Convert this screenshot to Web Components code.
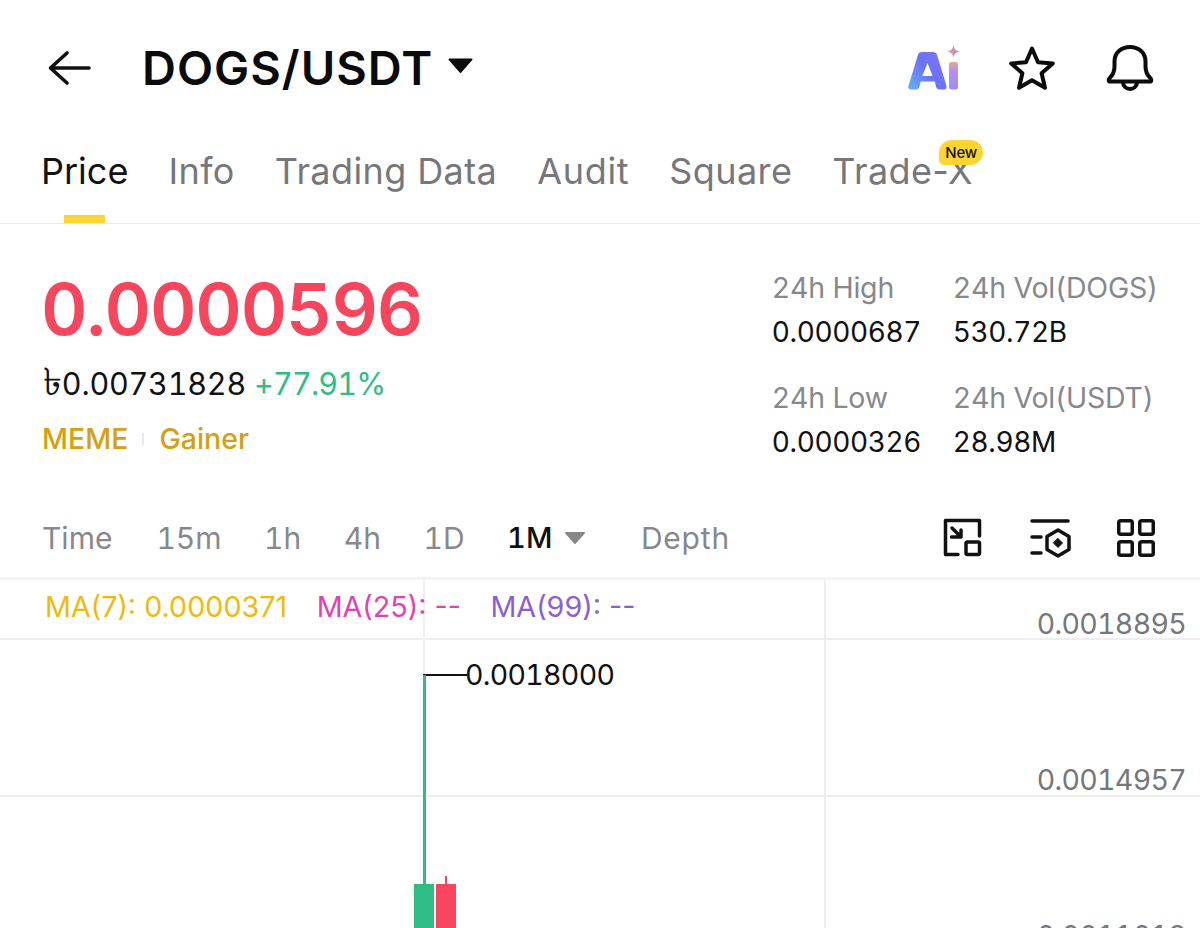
<!DOCTYPE html>
<html lang="en">
<head>
<meta charset="utf-8">
<title>DOGS/USDT</title>
<style>
  html, body { margin: 0; background: #fff; }
  body { width: 1200px; height: 928px; overflow: hidden; font-family: Inter, "Noto Sans", sans-serif; }
</style>
</head>
<body>
<market-page></market-page>

<script>
class TopBar extends HTMLElement {
  constructor() {
    super();
    this.attachShadow({ mode: "open" }).innerHTML = `
    <style>
      :host { display: flex; align-items: center; height: 135px; box-sizing: border-box; padding: 0 46px 0 47px; }
      .back { width: 46px; height: 40px; }
      h1 { margin: 0 0 0 49px; font-size: 47px; font-weight: 600; color: #0b0b0b; letter-spacing: 1px; }
      .caret { width: 25px; height: 17px; margin-left: 15px; margin-bottom: 5px; }
      .icons { margin-left: auto; display: flex; align-items: center; gap: 48px; }
      .icons svg:last-child { margin-left: 2px; }
      svg { display: block; }
    </style>
    <svg class="back" viewBox="0 0 46 40" fill="none" stroke="#111" stroke-width="3.6" stroke-linecap="round" stroke-linejoin="round">
      <path d="M42 20H4M20 5 3.5 20 20 35"/>
    </svg>
    <h1><slot></slot></h1>
    <svg class="caret" viewBox="0 0 25 17"><path d="M1.500 1.500h22a1 1 0 0 1 .8 1.600L13.300 15.600a1 1 0 0 1-1.600 0L.7 3.100a1 1 0 0 1 .8-1.600z" fill="#0b0b0b"/></svg>
    <div class="icons">
      <svg width="54" height="50" viewBox="0 0 54 50">
        <defs>
          <linearGradient id="a" x1="0" y1="1" x2="1" y2="0.2"><stop offset="0" stop-color="#5fb2ff"/><stop offset="0.55" stop-color="#6b72f6"/><stop offset="1" stop-color="#7d73f7"/></linearGradient>
          <linearGradient id="i" x1="0" y1="0" x2="0" y2="1"><stop offset="0" stop-color="#e9a58f"/><stop offset="0.3" stop-color="#b691ee"/><stop offset="1" stop-color="#9d8cf5"/></linearGradient>
          <linearGradient id="s" x1="0" y1="1" x2="1" y2="0"><stop offset="0" stop-color="#f3a26f"/><stop offset="1" stop-color="#9a86f5"/></linearGradient>
        </defs>
        <path fill="url(#a)" fill-rule="evenodd" d="M16 9h11c2 0 3.300.9 4 2.800L40.500 43c.5 2-.7 3.500-2.500 3.500h-4.500c-1.800 0-3-1-3.400-2.500l-1.300-5.500H14.700L13.300 44c-.5 1.600-1.700 2.500-3.400 2.500H5C3 46.500 1.800 45 2.400 43L12 11.800C12.700 9.900 14 9 16 9zM21.500 20l-5.200 13h10.400z"/>
        <rect x="43" y="19" width="9" height="27.500" rx="2.500" fill="url(#i)"/>
        <path fill="url(#s)" d="M47.500 2c.6 4 2.400 5.800 6.500 6.500-4.100.7-5.900 2.500-6.500 6.500-.6-4-2.400-5.800-6.500-6.500C45.100 7.800 46.900 6 47.500 2z"/>
      </svg>
      <svg width="48" height="46" viewBox="0 0 48 46" fill="none" stroke="#0b0b0b" stroke-width="4" stroke-linejoin="round">
        <path d="M24 3.500 30 17.200l14.800 1.300-11.200 9.800 3.400 14.500L24 35.200l-13 7.600 3.400-14.500L3.200 18.500 18 17.200z"/>
      </svg>
      <svg width="48" height="48" viewBox="0 0 48 48" fill="none" stroke="#0b0b0b" stroke-width="4" stroke-linejoin="round" stroke-linecap="round">
        <path d="M3.500 37.500c-1.400-1-.8-2.500.3-3.600 3.300-3.100 4.700-5.800 4.700-11.400v-5C8.500 9 15 3 24 3s15.500 6 15.500 14.500v5c0 5.600 1.400 8.300 4.700 11.400 1.100 1.100 1.700 2.600.3 3.600z"/>
        <path d="M16.800 38c.5 4.300 3.400 7 7.200 7s6.700-2.700 7.200-7"/>
      </svg>
    </div>`;
  }
}

class TabBar extends HTMLElement {
  constructor() {
    super();
    this.attachShadow({ mode: "open" }).innerHTML = `
    <style>
      :host { display: flex; gap: 40px; height: 89px; box-sizing: border-box; padding: 13px 0 0 41px; border-bottom: 1px solid #e9eaec; }
    </style>
    <slot></slot>`;
  }
}

class TabItem extends HTMLElement {
  constructor() {
    super();
    this.attachShadow({ mode: "open" }).innerHTML = `
    <style>
      :host { display: block; position: relative; height: 75px; font-size: 36px; line-height: 46px; color: #76777a; letter-spacing: 0.4px; white-space: nowrap; }
      :host([active]) { color: #111; letter-spacing: 0; }
      :host([active])::after { content: ""; position: absolute; left: 23px; bottom: 0; width: 41px; height: 8px; background: #fcd535; }
      .badge { position: absolute; right: -10px; top: -8px; height: 25px; padding: 0 6px; border-radius: 13px 13px 13px 5px; background: #fcd535; color: #111; font-size: 15px; font-weight: 500; line-height: 25px; letter-spacing: -0.2px; }
      .badge:empty { display: none; }
    </style>
    <slot></slot><span class="badge">${this.getAttribute("badge") || ""}</span>`;
  }
}

class PricePanel extends HTMLElement {
  constructor() {
    super();
    this.attachShadow({ mode: "open" }).innerHTML = `
    <style>
      :host { display: flex; justify-content: space-between; height: 281px; box-sizing: border-box; padding: 44px 42px 0 41px; font-variant-numeric: tabular-nums; }
      .last { font-size: 72px; font-weight: 600; line-height: 82px; color: #f6465d; letter-spacing: -1.200px; }
      .fiat { display: flex; align-items: baseline; margin-top: 12px; padding-left: 2px; font-size: 30.500px; line-height: 44px; color: #111; letter-spacing: -0.2px; white-space: pre; }
      .fiat i { font-style: normal; font-size: 38px; line-height: 0; }
      .fiat span { margin-left: 8px; color: #2ebd85; letter-spacing: -0.8px; }
      .tags { display: flex; align-items: center; margin-top: 11px; padding-left: 1px; font-size: 28.500px; line-height: 44px; font-weight: 500; color: #d6a00f; }
      .tags i { width: 2px; height: 12px; margin: 0 15px 0 14px; background: #e8e9ec; }
      .stats { display: grid; grid-template-columns: 181px auto; grid-auto-rows: 44px; margin-top: -2px; font-size: 28px; line-height: 44px; color: #111; letter-spacing: -0.4px; }
      .stats b { font-size: 28.500px; font-weight: 400; color: #86888c; letter-spacing: -0.2px; }
      .stats .row2 { margin-top: 22px; }
    </style>
    <div>
      <div class="last">0.0000596</div>
      <div class="fiat"><i>৳</i>0.00731828<span>+77.91%</span></div>
      <div class="tags">MEME<i></i>Gainer</div>
    </div>
    <div class="stats">
      <b>24h High</b><b>24h Vol(DOGS)</b>
      <div>0.0000687</div><div>530.72B</div>
      <b class="row2">24h Low</b><b class="row2">24h Vol(USDT)</b>
      <div class="row2">0.0000326</div><div class="row2">28.98M</div>
    </div>`;
  }
}

class IntervalBar extends HTMLElement {
  constructor() {
    super();
    this.attachShadow({ mode: "open" }).innerHTML = `
    <style>
      :host { display: flex; align-items: center; height: 75px; padding: 0 45px 7px 42px; box-sizing: border-box; font-size: 30px; color: #86888c; border-bottom: 3px solid #f3f3f4; font-variant-numeric: tabular-nums; }
      .list { display: flex; gap: 42.500px; }
      .list span:first-child { margin-right: 1.500px; }
      .on { display: flex; align-items: center; color: #111; font-size: 29px; font-weight: 500; margin-right: 13px; }
      .on svg { margin-left: 13px; }
      .depth { letter-spacing: 0.8px; }
      .tools { margin-left: auto; display: flex; align-items: center; gap: 46px; }
      svg { display: block; }
    </style>
    <div class="list">
      <span>Time</span><span>15m</span><span>1h</span><span>4h</span><span>1D</span>
      <span class="on">1M<svg width="20" height="12" viewBox="0 0 20 12"><path d="M1 0h18a1 1 0 0 1 .8 1.600L10.800 11.600a1 1 0 0 1-1.600 0L.2 1.600A1 1 0 0 1 1 0z" fill="#86888c"/></svg></span>
      <span class="depth">Depth</span>
    </div>
    <div class="tools">
      <svg width="40" height="40" viewBox="0 0 40 40" fill="none" stroke="#111" stroke-width="3.500" stroke-linecap="round" stroke-linejoin="round">
        <path d="M15 36.500H2.500V2.500h34V18"/><path d="M9 10l9 9M8.500 19h9.500v-7" /><rect x="23" y="24" width="13.500" height="12.500" rx="1.500"/>
      </svg>
      <svg width="42" height="40" viewBox="0 0 42 40" fill="none" stroke="#111" stroke-width="3.500" stroke-linecap="round" stroke-linejoin="round">
        <path d="M3 3h36M3 19h9M3 35h9M29 12l11 6.500v13L29 38l-11-6.500v-13z"/><path d="M29 20.500l4.500 4.500-4.500 4.500-4.500-4.500z" fill="#111" stroke-width="1"/>
      </svg>
      <svg width="38" height="38" viewBox="0 0 38 38" fill="none" stroke="#111" stroke-width="3.500" stroke-linejoin="round">
        <rect x="1.750" y="1.750" width="13.500" height="13.500" rx="2"/><rect x="22.750" y="1.750" width="13.500" height="13.500" rx="2"/>
        <rect x="1.750" y="22.750" width="13.500" height="13.500" rx="2"/><rect x="22.750" y="22.750" width="13.500" height="13.500" rx="2"/>
      </svg>
    </div>`;
  }
}

// candlestick area: everything in here sits at its own spot on the chart canvas
class KlineChart extends HTMLElement {
  constructor() {
    super();
    this.attachShadow({ mode: "open" }).innerHTML = `
    <style>
      :host { display: block; position: relative; height: 348px; overflow: hidden; font-size: 28.500px; }
      .h, .v { position: absolute; background: #eeeeef; }
      .h { left: 0; right: 0; height: 2px; }
      .v { top: 0; bottom: 0; width: 2px; }
      .axis { position: absolute; right: 14px; color: #76777a; line-height: 34px; font-variant-numeric: tabular-nums; letter-spacing: -0.7px; }
      .ma { position: absolute; top: 10px; left: 45px; display: flex; gap: 29.500px; line-height: 34px; font-size: 28.700px; white-space: nowrap; }
      .peak { position: absolute; left: 465px; top: 78px; line-height: 34px; color: #111; font-variant-numeric: tabular-nums; letter-spacing: -0.7px; }
      .lead { position: absolute; left: 423px; top: 94px; width: 44px; height: 2px; background: #111; }
      .wick, .body { position: absolute; }
      .up { background: #2ebd85; }
      .down { background: #f6465d; }
    </style>
    <div class="h" style="top:58px"></div>
    <div class="h" style="top:215px"></div>
    <div class="v" style="left:423px"></div>
    <div class="v" style="left:824px"></div>
    <div class="ma">
      <span style="color:#f0b90b">MA(7): 0.0000371</span>
      <span style="color:#e43fb4">MA(25): --</span>
      <span style="color:#8a60d0">MA(99): --</span>
    </div>
    <div class="axis" style="top:27px">0.0018895</div>
    <div class="axis" style="top:183px">0.0014957</div>
    <div class="axis" style="top:339px">0.0011019</div>
    <div class="lead"></div>
    <div class="peak">0.0018000</div>
    <div class="wick up" style="left:423px;top:95px;width:3px;height:210px"></div>
    <div class="body up" style="left:414px;top:304px;width:20px;height:44px"></div>
    <div class="wick down" style="left:445px;top:296px;width:2px;height:10px"></div>
    <div class="body down" style="left:436px;top:304px;width:20px;height:44px"></div>`;
  }
}

class MarketPage extends HTMLElement {
  constructor() {
    super();
    this.attachShadow({ mode: "open" }).innerHTML = `
    <style>
      :host { display: block; width: 1200px; height: 928px; overflow: hidden; background: #fff; }
    </style>
    <top-bar>DOGS/USDT</top-bar>
    <tab-bar>
      <tab-item active>Price</tab-item>
      <tab-item>Info</tab-item>
      <tab-item>Trading Data</tab-item>
      <tab-item style="letter-spacing:0.7px">Audit</tab-item>
      <tab-item>Square</tab-item>
      <tab-item badge="New">Trade-X</tab-item>
    </tab-bar>
    <price-panel></price-panel>
    <interval-bar></interval-bar>
    <kline-chart></kline-chart>`;
  }
}

customElements.define("top-bar", TopBar);
customElements.define("tab-bar", TabBar);
customElements.define("tab-item", TabItem);
customElements.define("price-panel", PricePanel);
customElements.define("interval-bar", IntervalBar);
customElements.define("kline-chart", KlineChart);
customElements.define("market-page", MarketPage);
</script>
</body>
</html>
